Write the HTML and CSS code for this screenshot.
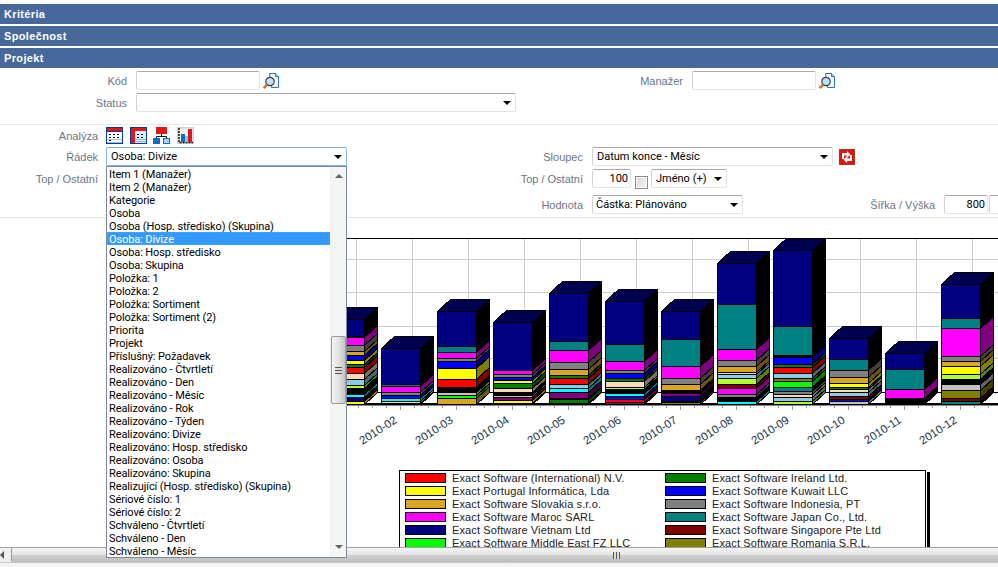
FILE: index.html
```html
<!DOCTYPE html>
<html lang="cs">
<head>
<meta charset="utf-8">
<title>Projekt - analýza</title>
<link rel="stylesheet" href="styles.css">
</head>
<body>
<div class="page">
  <main class="main">
    <div class="section-bar">Kritéria</div>
    <div class="section-bar">Společnost</div>
    <div class="section-bar">Projekt</div>

    <section class="filters">
      <div class="row">
        <label class="label w-kod">Kód</label>
        <input class="input w-code" type="text">
        <svg class="lookup" viewBox="0 0 18 18"><path d="M7.5 1.5h6l3 3v11h-7z" fill="#f2f8fe" stroke="#2a76b8"/><path d="M13.5 1.5v3h3" fill="#bcdcf5" stroke="#2a76b8"/><circle cx="8" cy="9.5" r="4.2" fill="#bfe3f7" stroke="#39424a" stroke-width="1.2"/><path d="M5 12.8 1.6 16.2" stroke="#d9741a" stroke-width="2.6"/></svg>
        <label class="label w-man">Manažer</label>
        <input class="input w-code" type="text">
        <svg class="lookup" viewBox="0 0 18 18"><path d="M7.5 1.5h6l3 3v11h-7z" fill="#f2f8fe" stroke="#2a76b8"/><path d="M13.5 1.5v3h3" fill="#bcdcf5" stroke="#2a76b8"/><circle cx="8" cy="9.5" r="4.2" fill="#bfe3f7" stroke="#39424a" stroke-width="1.2"/><path d="M5 12.8 1.6 16.2" stroke="#d9741a" stroke-width="2.6"/></svg>
      </div>
      <div class="row row-gap3">
        <label class="label w-kod">Status</label>
        <div class="select w-status"><span class="caret"></span></div>
      </div>
    </section>

    <section class="analysis">
      <div class="row row-icons">
        <label class="label w-left">Analýza</label>
        <div class="icons">
          <svg class="tool" viewBox="0 0 17 17"><rect x=".5" y=".5" width="16" height="16" fill="#fff" stroke="#0b3c8c"/><rect x="1" y="1" width="15" height="3" fill="#e01818"/><rect x="1" y="4" width="15" height="1" fill="#0b3c8c"/><path d="M3 7.500h2M7 7.500h2M11 7.500h2M3 10.500h2M7 10.500h2M11 10.500h2M3 13.500h2" stroke="#111"/><path d="M1 12.500h15M1 15.500h15" stroke="#9cc3ea"/></svg>
          <svg class="tool" viewBox="0 0 17 17"><rect x=".5" y=".5" width="16" height="16" fill="#dcecfb" stroke="#0b3c8c"/><rect x="1" y="1" width="15" height="3" fill="#e01818"/><rect x="1" y="4" width="4" height="12" fill="#e01818"/><path d="M7 7.500h2M11 7.500h2M7 10.500h2M11 10.500h2" stroke="#111"/><path d="M5 12.500h11M5 14.500h11" stroke="#8fbce8"/></svg>
          <svg class="tool" viewBox="0 0 17 17"><rect x="3" y="0" width="11" height="7" fill="#e01818"/><path d="M8.500 7v2.500M3.500 11V9.500h10V11" fill="none" stroke="#111"/><rect x="0" y="11" width="7" height="6" fill="#0f6fc6"/><rect x="10.500" y="11.500" width="6" height="5" fill="#a9d4f5" stroke="#0f6fc6"/></svg>
          <svg class="tool" viewBox="0 0 17 17"><rect x="0" y="0" width="17" height="17" fill="#cfcfcf"/><rect x="1.500" y="1.500" width="14" height="14" fill="#f4f4f4"/><path d="M2 1v14.500H16" fill="none" stroke="#111" stroke-width="1.500" stroke-dasharray="2 1"/><rect x="4" y="7" width="4" height="8" fill="#0f6fc6"/><rect x="8" y="9" width="3" height="6" fill="#8cc4ef"/><rect x="11" y="2" width="4" height="13" fill="#e01818"/></svg>
        </div>
      </div>
      <div class="row row-gap3">
        <label class="label w-left">Řádek</label>
        <div class="select select-focus w-wide">Osoba: Divize<span class="caret"></span></div>
        <label class="label w-slo">Sloupec</label>
        <div class="select w-wide">Datum konce - Měsíc<span class="caret"></span></div>
        <svg class="swap" viewBox="0 0 16 16"><rect width="16" height="16" fill="#e21212"/><rect x=".5" y=".5" width="15" height="15" fill="none" stroke="#a83a08"/><path d="M3 10V4h5V2l3.500 3.500L8 9V6.500H5V10zM13 6v6H8v2l-3.500-3.500L8 7v2.500h3V6z" fill="#fff"/></svg>
      </div>
      <div class="row row-gap3">
        <label class="label w-left">Top / Ostatní</label>
        <label class="label w-top">Top / Ostatní</label>
        <input class="input input-num w-num" type="text" value="100">
        <span class="check"></span>
        <div class="select w-name">Jméno (+)<span class="caret"></span></div>
      </div>
      <div class="row row-gap7">
        <label class="label w-hod">Hodnota</label>
        <div class="select w-value">Částka: Plánováno<span class="caret"></span></div>
        <label class="label w-size">Šířka / Výška</label>
        <input class="input input-num w-dim" type="text" value="800">
        <input class="input input-num w-dim dim-2" type="text">
      </div>
    </section>

    <svg id="chart" class="chart" viewBox="0 218 998 252" width="998" height="252"></svg>

    <div class="legend">
      <div class="legend-col">
        <div class="legend-item"><i class="sw c-red"></i>Exact Software (International) N.V.</div>
        <div class="legend-item"><i class="sw c-yellow"></i>Exact Portugal Informática, Lda</div>
        <div class="legend-item"><i class="sw c-gold"></i>Exact Software Slovakia s.r.o.</div>
        <div class="legend-item"><i class="sw c-magenta"></i>Exact Software Maroc SARL</div>
        <div class="legend-item"><i class="sw c-navy"></i>Exact Software Vietnam Ltd</div>
        <div class="legend-item"><i class="sw c-lime"></i>Exact Software Middle East FZ LLC</div>
      </div>
      <div class="legend-col">
        <div class="legend-item"><i class="sw c-green"></i>Exact Software Ireland Ltd.</div>
        <div class="legend-item"><i class="sw c-blue"></i>Exact Software Kuwait LLC</div>
        <div class="legend-item"><i class="sw c-gray"></i>Exact Software Indonesia, PT</div>
        <div class="legend-item"><i class="sw c-teal"></i>Exact Software Japan Co., Ltd.</div>
        <div class="legend-item"><i class="sw c-maroon"></i>Exact Software Singapore Pte Ltd</div>
        <div class="legend-item"><i class="sw c-olive"></i>Exact Software Romania S.R.L.</div>
      </div>
    </div>
  </main>

  <div class="hscroll">
    <span class="arrow-left"></span>
    <div class="hthumb"><span class="grip-v"></span></div>
  </div>
  <div class="foot"></div>

  <div class="dropdown">
    <ul class="options">
      <li>Item 1 (Manažer)</li>
      <li>Item 2 (Manažer)</li>
      <li>Kategorie</li>
      <li>Osoba</li>
      <li>Osoba (Hosp. středisko) (Skupina)</li>
      <li class="selected">Osoba: Divize</li>
      <li>Osoba: Hosp. středisko</li>
      <li>Osoba: Skupina</li>
      <li>Položka: 1</li>
      <li>Položka: 2</li>
      <li>Položka: Sortiment</li>
      <li>Položka: Sortiment (2)</li>
      <li>Priorita</li>
      <li>Projekt</li>
      <li>Příslušný: Požadavek</li>
      <li>Realizováno - Čtvrtletí</li>
      <li>Realizováno - Den</li>
      <li>Realizováno - Měsíc</li>
      <li>Realizováno - Rok</li>
      <li>Realizováno - Týden</li>
      <li>Realizováno: Divize</li>
      <li>Realizováno: Hosp. středisko</li>
      <li>Realizováno: Osoba</li>
      <li>Realizováno: Skupina</li>
      <li>Realizující (Hosp. středisko) (Skupina)</li>
      <li>Sériové číslo: 1</li>
      <li>Sériové číslo: 2</li>
      <li>Schváleno - Čtvrtletí</li>
      <li>Schváleno - Den</li>
      <li>Schváleno - Měsíc</li>
    </ul>
    <div class="vscroll">
      <span class="arrow-up"></span>
      <div class="vthumb"><span class="grip-h"></span></div>
      <span class="arrow-down"></span>
    </div>
  </div>
</div>
<script src="chart.js"></script>
</body>
</html>
```

FILE: styles.css
```css
* { box-sizing: border-box; }
html, body { margin: 0; height: 100%; overflow: hidden; background: #fff; }
body { font-family: "Liberation Sans", Arial, sans-serif; font-size: 12px; color: #000; }

.page { position: relative; width: 998px; height: 567px; display: flex; flex-direction: column; overflow: hidden; }
.main { flex: none; height: 547px; padding-top: 2px; overflow: hidden; }

.section-bar {
  height: 20px; margin-top: 2px; padding-left: 4px;
  background: #46689a; color: #fff;
  font: bold 11px/20px "Liberation Sans", Arial, sans-serif; letter-spacing: .35px;
}

.row { display: flex; align-items: center; height: 19px; }
.row-gap3 { margin-top: 3px; }
.row-gap7 { margin-top: 7px; }
.row-icons { height: 17px; }

.label { flex: none; text-align: right; color: #6b7686; font-size: 11px; white-space: nowrap; margin-right: 9px; }
.w-kod { width: 127px; }
.w-man { width: 403px; }
.w-left { width: 98px; margin-right: 8px; }
.w-slo { width: 236px; }
.w-top { width: 477px; }
.w-hod { width: 583px; }
.w-size { width: 192px; }

.filters { height: 57px; padding-top: 3px; border-bottom: 1px solid #e6e6e6; }
.analysis { height: 93px; padding-top: 2px; border-bottom: 1px solid #e6e6e6; }

.input, .select {
  flex: none; height: 19px; background: #fff;
  border: 1px solid #dfe5ec; border-top-color: #a8a8a8; border-left-color: #cfd3d8; border-radius: 2px;
  font: 11px/18px Roboto, "Liberation Sans", Arial, sans-serif; color: #000; padding: 0 4px 0 3px; outline: none;
}
.input-num { text-align: right; padding: 0 2px; line-height: 17px; }
.select { position: relative; white-space: nowrap; }
.select-focus { border-color: #7fb5df; border-top-color: #7fa7c9; }

.w-code { width: 124px; }
.w-status { width: 380px; }
.w-wide { width: 241px; padding-left: 4px; }
.w-num { width: 39px; }
.w-name { width: 76px; padding-left: 4px; }
.w-value { width: 151px; }
.w-dim { width: 44px; }
.dim-2 { margin-left: 1px; }

.caret { position: absolute; right: 4px; top: 7px; width: 0; height: 0; border: 4px solid transparent; border-top: 4px solid #000; border-bottom: 0; }

.lookup { flex: none; width: 18px; height: 18px; margin-left: 2px; }
.icons { display: flex; gap: 6.500px; }
.tool { flex: none; width: 17px; height: 17px; }
.swap { flex: none; width: 16px; height: 16px; margin-left: 6px; }
.check { flex: none; width: 13px; height: 13px; margin: 7px 3px 0 4px; background: linear-gradient(135deg, #d8d8d8, #f4f4f4); border: 1px solid #8a8a8a; box-shadow: inset 0 0 0 1px #fff; }

.chart { display: block; }
.chart text { font: 11.500px "Liberation Sans", Arial, sans-serif; fill: #20304a; }

.legend {
  display: flex; width: 527px; height: 90px; margin-left: 399px; padding: 0 0 0 5px;
  border: 1px solid #000; background: #fff;
  box-shadow: 1px 0 0 #fff, 4px 2px 0 #000;
}
.legend-col { flex: none; width: 260px; }
.legend-item { display: flex; align-items: center; height: 13px; font-size: 11px; letter-spacing: .12px; color: #222; white-space: nowrap; }
.sw { flex: none; width: 41px; height: 10px; margin-right: 6px; border: 1px solid #000; }
.c-red { background: #f00; }
.c-yellow { background: #ff0; }
.c-gold { background: #daa520; }
.c-magenta { background: #f0f; }
.c-navy { background: #000080; }
.c-lime { background: #0f0; }
.c-green { background: #008000; }
.c-blue { background: #00f; }
.c-gray { background: #808080; }
.c-teal { background: #008080; }
.c-maroon { background: #800000; }
.c-olive { background: #808000; }

.hscroll { flex: none; height: 16px; padding-left: 11px; background: #f0f0f0; border-top: 1px solid #a0a0a0; border-bottom: 1px solid #c8c8c8; position: relative; overflow: hidden; }
.hthumb { width: 1210px; height: 14px; display: flex; align-items: center; justify-content: center; border-left: 1px solid #999; border-radius: 2px; background: linear-gradient(#f4f4f4 0, #e6e6e6 45%, #cfcfcf 55%, #bdbdbd 100%); }
.grip-v { width: 7px; height: 7px; background: repeating-linear-gradient(90deg, #555 0 1px, #ddd 1px 3px); }
.arrow-left { position: absolute; left: 0; top: 3px; width: 0; height: 0; border: 4px solid transparent; border-right: 4px solid #555; border-left: 0; }
.foot { flex: none; height: 4px; background: #f4f4f4; }

.dropdown { position: absolute; left: 106px; top: 166px; width: 241px; height: 392px; display: flex; background: #fff; border: 1px solid #7e8a99; }
.options { flex: 1; margin: 0; padding: 0; list-style: none; overflow: hidden; font: 11px Roboto, "Liberation Sans", Arial, sans-serif; letter-spacing: -.1px; }
.options li { height: 13px; line-height: 15px; padding-left: 2px; white-space: nowrap; }
.options .selected { background: #3399ff; color: #fff; outline: 1px dotted #d98a30; outline-offset: -1px; }

.vscroll { flex: none; width: 16px; display: flex; flex-direction: column; align-items: center; background: #f5f5f5; border-left: 1px solid #eee; }
.arrow-up { margin-top: 7px; width: 0; height: 0; border: 4px solid transparent; border-bottom: 4px solid #666; border-top: 0; }
.arrow-down { margin-top: 141px; width: 0; height: 0; border: 4px solid transparent; border-top: 4px solid #666; border-bottom: 0; }
.vthumb { width: 15px; height: 68px; margin-top: 158px; display: flex; align-items: center; justify-content: center; border: 1px solid #9a9a9a; border-radius: 2px; background: linear-gradient(90deg, #f6f6f6, #e2e2e2 50%, #c4c4c4); }
.grip-h { width: 7px; height: 7px; background: repeating-linear-gradient(#555 0 1px, #ddd 1px 3px); }
```

FILE: chart.js
```js
(function () {
  var NS = "http://www.w3.org/2000/svg";
  var svg = document.getElementById("chart");
  var C = { R: "#ff0000", Y: "#ffff00", G: "#daa520", M: "#ff00ff", N: "#000080", L: "#00ff00",
            D: "#008000", B: "#0000ff", A: "#808080", T: "#008080", W: "#800000", O: "#808000",
            K: "#000000", C: "#00ffff", P: "#800080", S: "#87ceeb", Q: "#ffdab9", V: "#adff2f", E: "#c0c0c0" };
  // Each bar: label and [colour key, lower edge] pairs, top edge first; values in 1/3 px from y = 230.
  var bars = [
    ["2010-01", 268, "N317 T322 M346 A364 G374 B391 Y403 D412 R430 Q448 S466 V474 K493 C501 N514 Y523"],
    ["2010-02", 355, "N461 T467 M485 A494 B505 C514 Q520 K523"],
    ["2010-03", 244, "N347 T367 M385 A394 B413 Y448 R470 K485 E494 L503 G523"],
    ["2010-04", 277, "N419 M433 A442 B449 Y458 D475 Q485 K494 E500 P510 Y520 K523"],
    ["2010-05", 190, "N332 T361 M397 A416 G436 D445 R463 S475 C485 P503 K506 D518 K523"],
    ["2010-06", 214, "N341 T394 M421 A428 B443 D452 Q470 V478 K488 C497 B506 R515 P523"],
    ["2010-07", 244, "N328 T409 M445 A463 G481 K488 P497 N512 K515 O523"],
    ["2010-08", 100, "N223 T358 M391 A409 G425 Q433 S443 V463 W473 M492 A502 K512 C523"],
    ["2010-09", 61, "N289 T376 K380 B401 D412 R430 S443 O452 L470 T482 A491 Q502 S512 V523"],
    ["2010-10", 325, "N388 T421 A440 G460 Y470 D478 Q487 S497 W506 B514 E523"],
    ["2010-11", 370, "N418 T478 M505 K509 G514 K523"],
    ["2010-12", 163, "N263 T295 M379 A394 G409 Y433 V448 K458 C463 E481 O505 W514 T523"]
  ];
  var DX = 13, DY = 12, W = 39, FIRST = 325, PITCH = 56;

  function el(name, attrs, text) {
    var e = document.createElementNS(NS, name);
    for (var k in attrs) e.setAttribute(k, attrs[k]);
    if (text) e.textContent = text;
    svg.appendChild(e);
    return e;
  }
  function py(z) { return Math.round(230 + z / 3); }
  function dim(hex) {
    if (hex === C.N || hex === C.T) return "#000000";
    var n = parseInt(hex.slice(1), 16);
    var r = (n >> 16) >> 1, g = ((n >> 8) & 255) >> 1, b = (n & 255) >> 1;
    return "rgb(" + r + "," + g + "," + b + ")";
  }
  function line(x1, y1, x2, y2, color) {
    el("line", { x1: x1, y1: y1, x2: x2, y2: y2, stroke: color, "shape-rendering": "crispEdges" });
  }

  var i;
  [259, 292, 326, 358].forEach(function (v) { line(340, v + .5, 998, v + .5, "#cccccc"); });
  for (i = 0; i < 12; i++) line(356.5 + PITCH * i, 238, 356.5 + PITCH * i, 392, "#cccccc");
  line(340, 238.5, 998, 238.5, "#000");
  line(340, 392.5, 998, 392.5, "#000");
  line(340, 404.5, 998, 404.5, "#000");
  line(340, 403.5, 998, 403.5, "#000");
  line(340, 405.5, 998, 405.5, "#8a8a8a");
  for (i = 0; i < 50; i++) {
    var tx = 316.5 + 14 * i;
    line(tx, 406, tx, (i % 4 === 2) ? 410 : 408, "#9a9a9a");
  }

  bars.forEach(function (b, idx) {
    var x = FIRST + PITCH * idx + .5, prev = py(b[1]), top = prev;
    var segs = b[2].split(" ");
    var list = segs.map(function (s) {
      var r = { c: C[s[0]], a: prev, b: py(+s.slice(1)) };
      prev = r.b;
      return r;
    });
    // side faces
    list.forEach(function (s) {
      var xr = x + W;
      el("polygon", { points: xr + "," + (s.a + .5) + " " + (xr + DX) + "," + (s.a + .5 - DY) + " " + (xr + DX) + "," + (s.b + .5 - DY) + " " + xr + "," + (s.b + .5),
        fill: dim(s.c), stroke: "#000", "shape-rendering": "crispEdges" });
    });
    // top face
    el("polygon", { points: x + "," + (top + .5) + " " + (x + DX) + "," + (top + .5 - DY) + " " + (x + W + DX) + "," + (top + .5 - DY) + " " + (x + W) + "," + (top + .5),
      fill: "#000050", stroke: "#000", "shape-rendering": "crispEdges" });
    // front faces
    list.forEach(function (s) {
      el("rect", { x: x, y: s.a + .5, width: W, height: s.b - s.a, fill: s.c, stroke: "#000", "shape-rendering": "crispEdges" });
    });
    // category label
    var ax = x + 16.5, ay = 422;
    el("text", { x: ax, y: ay, "text-anchor": "end", transform: "rotate(-33 " + ax + " " + ay + ")" }, b[0]);
  });
})();
```
